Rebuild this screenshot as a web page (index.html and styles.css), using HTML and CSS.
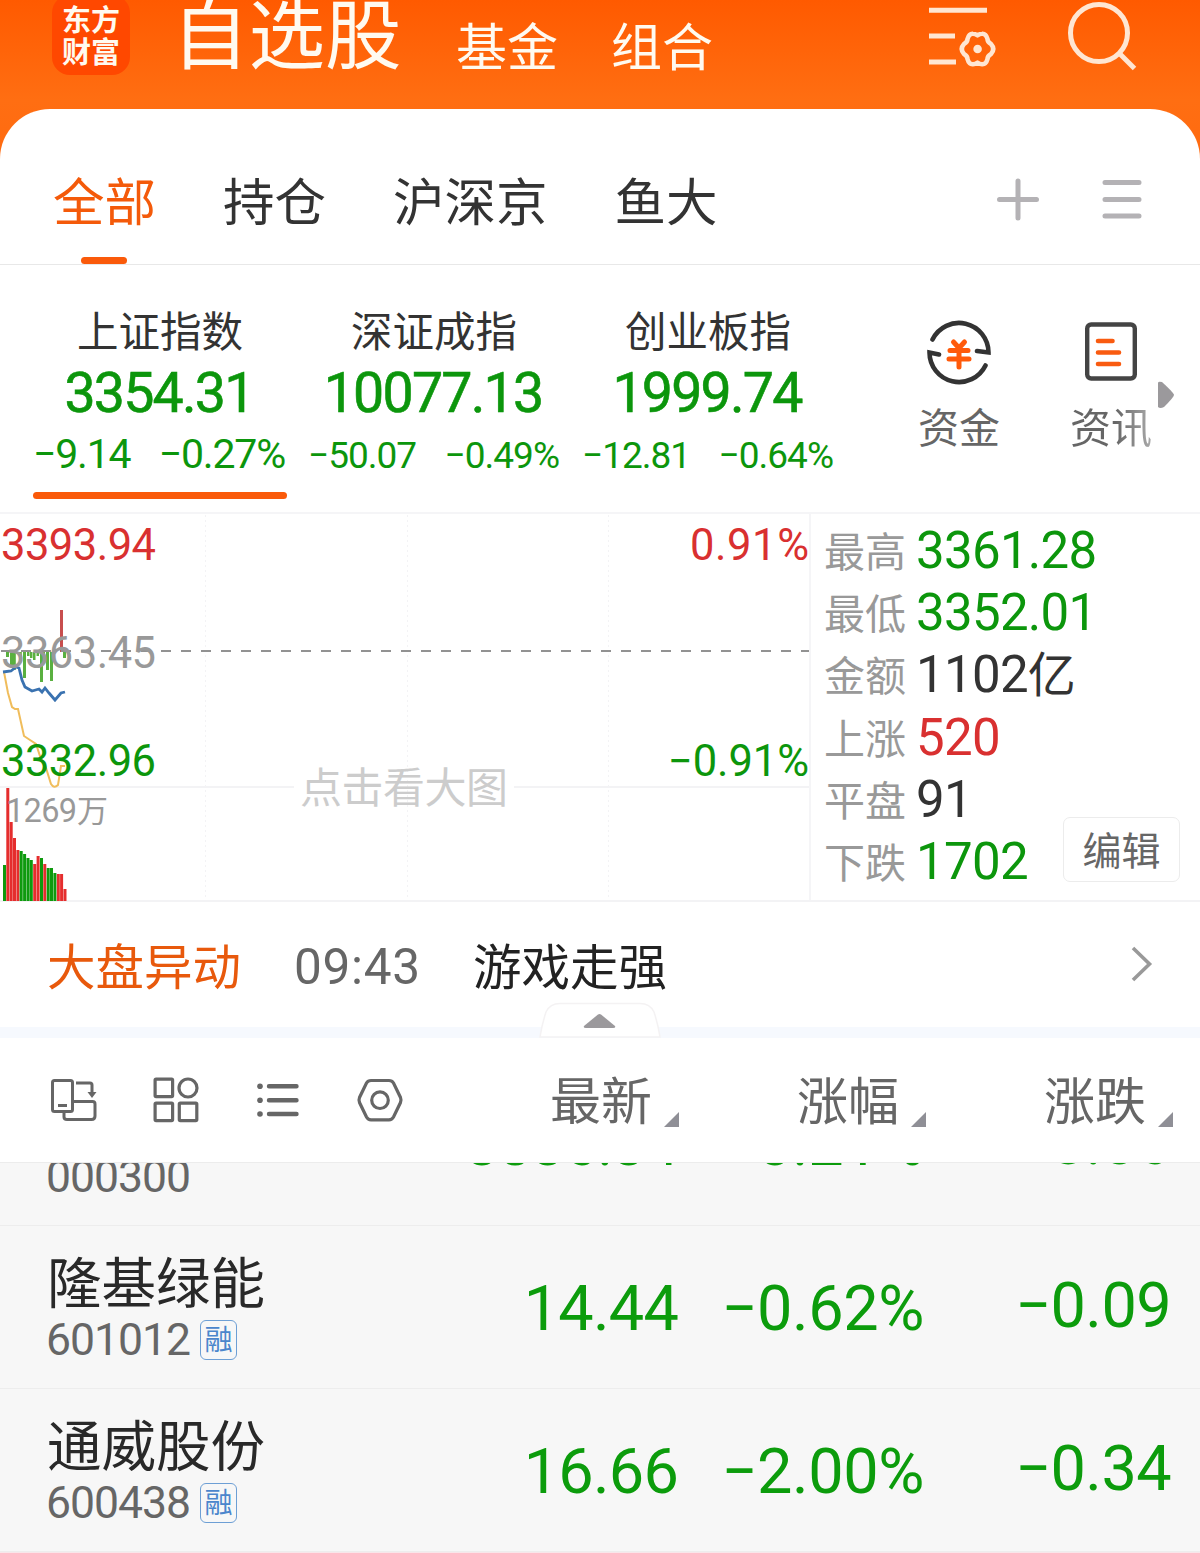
FILE: index.html
```html
<!DOCTYPE html>
<html lang="zh-CN">
<head>
<meta charset="utf-8">
<title>自选股</title>
<link rel="stylesheet" href="styles.css">
</head>
<body>
<header class="header">
  <div class="logo"><span>东方</span><span>财富</span></div>
  <nav class="main-nav">
    <span class="main-nav-active">自选股</span>
    <span class="main-nav-item">基金</span>
    <span class="main-nav-item">组合</span>
  </nav>
  <svg class="icon-manage" width="72" height="70" viewBox="0 0 72 70" fill="none" stroke="#ffe6d2" stroke-width="5">
    <path d="M3 10.300H61M3 36H29M3 62H30"/>
    <path stroke-width="4.600" stroke-linejoin="round" d="M51.500 35.300Q54 33.800 56 33.800Q60 33.500 61.500 39Q61.500 42 65 44Q69.500 49 65 54Q61.500 56 61.500 59Q60 64.500 56 64.200Q54 64.200 51.500 62.700Q49 64.200 47 64.200Q43 64.500 41.500 59Q41.500 56 38 54Q33.500 49 38 44Q41.500 42 41.500 39Q43 33.500 47 33.800Q49 33.800 51.500 35.300Z"/>
    <circle cx="51.600" cy="49" r="4.300" fill="#ffe6d2" stroke="none"/>
  </svg>
  <svg class="icon-search" width="72" height="72" viewBox="0 0 72 72" fill="none" stroke="#ffe6d2" stroke-width="5">
    <circle cx="34" cy="33" r="28.500"/>
    <path d="M54 53L69.500 68.500"/>
  </svg>
</header>

<main class="sheet">
  <div class="tabs">
    <span class="tab tab-active">全部</span>
    <span class="tab">持仓</span>
    <span class="tab">沪深京</span>
    <span class="tab">鱼大</span>
    <svg class="tab-add" width="44" height="44" viewBox="0 0 44 44" stroke="#b4b2b5" stroke-width="5" stroke-linecap="round"><path d="M3.500 22.500H40.500M22 4V41"/></svg>
    <svg class="tab-menu" width="44" height="44" viewBox="0 0 44 44" stroke="#b4b2b5" stroke-width="5" stroke-linecap="round"><path d="M5 5.500H39M5 22.500H39M5 39H39"/></svg>
  </div>

  <section class="indices">
    <div class="index index-active">
      <div class="index-name">上证指数</div>
      <div class="index-value">3354.31</div>
      <div class="index-change"><span>−9.14</span><span>−0.27%</span></div>
    </div>
    <div class="index">
      <div class="index-name">深证成指</div>
      <div class="index-value">10077.13</div>
      <div class="index-change"><span>−50.07</span><span>−0.49%</span></div>
    </div>
    <div class="index">
      <div class="index-name">创业板指</div>
      <div class="index-value">1999.74</div>
      <div class="index-change"><span>−12.81</span><span>−0.64%</span></div>
    </div>
    <div class="shortcut">
      <svg width="68" height="68" viewBox="0 0 68 68" fill="none" stroke="#333" stroke-width="4.600" stroke-linecap="round">
        <path d="M7.500 23A29.500 29.500 0 0 1 63.500 36L52 34.500M60.500 49A29.500 29.500 0 0 1 4.500 36L14 38" transform="translate(0 -1.500)"/>
        <path stroke="#ff5a0a" stroke-width="5" d="M28.500 24L34 30L39.500 24M25 32.500H43M24 41H44M34 31V49"/>
      </svg>
      <span>资金</span>
    </div>
    <div class="shortcut">
      <svg width="68" height="68" viewBox="0 0 68 68" fill="none" stroke="#444" stroke-width="4.400" stroke-linecap="round">
        <rect x="10.200" y="6.500" width="47.600" height="54" rx="4"/>
        <path stroke="#f95b10" stroke-width="4.600" d="M21 23H35.500M21 34.500H42M21 46H42"/>
      </svg>
      <span class="shortcut-fade">资讯</span>
    </div>
    <svg class="more" width="16" height="28" viewBox="0 0 16 28"><path d="M0 2Q0 0 4 1Q16 12 16 14Q16 16 6 26Q2 28 0 26Z" fill="#9b999c"/></svg>
  </section>

  <section class="market">
    <svg class="chart" width="810" height="388" viewBox="0 513 810 388">
      <g stroke="#f3f3f5" stroke-width="2">
        <path d="M0 787H294M514 787H810"/>
        <path stroke-dasharray="2 3" stroke-width="1" d="M205.500 515V900M407.500 515V900M608.500 515V900"/>
      </g>
      <path d="M4 672L8 693L12 707L15 709L18 709L24 736L30 740L36 744L40 756L46 768L51 784Q54 789 58 785L61 766L65 766" fill="none" stroke="#f0bd5c" stroke-width="2"/>
      <path d="M6 652h3v5h-3zM10 652h3v13h-3zM13 652h2.800v18h-2.800zM19 652h2.800v8h-2.800zM23 652h3v26h-3zM27 652h2.500v4h-2.500zM30 652h2.500v6h-2.500zM33 652h2.500v8h-2.500zM36.500 652h2.500v4h-2.500zM40 652h3v30h-3zM43 652h2v4h-2zM46 652h3v18h-3zM50 652h3v29h-3zM63 652h3v6h-3z" fill="#5ab040"/>
      <path d="M61.500 610V652" stroke="#c84e4e" stroke-width="3"/>
      <path d="M1 651H810" stroke="#929292" stroke-width="2" stroke-dasharray="10 10"/>
      <path d="M3 672L11 671L16 667L19 668L22 680L25 687L32 691L39 689L42 692L45 688L49 693L55 700L61 693L65 692" fill="none" stroke="#3a72b0" stroke-width="2.800"/>
      <g class="chart-label">
        <text class="up" x="1" y="560" textLength="155">3393.94</text>
        <text class="flat" x="1" y="668" textLength="155">3363.45</text>
        <text class="down" x="1" y="776" textLength="155">3332.96</text>
        <text class="up" x="690" y="560" textLength="119">0.91%</text>
        <text class="down" x="668" y="776" textLength="141">−0.91%</text>
      </g>
      <path d="M6.300 788h3v113h-3zM9.700 822h3v79h-3zM13 838h3v63h-3zM16.400 850h3v51h-3zM33.200 864h3v37h-3zM36.600 856h3v45h-3zM43.300 864h3v37h-3zM56.800 874h3v27h-3zM60.100 874h3v27h-3zM63.500 889h3v12h-3z" fill="#e52d2d"/>
      <path d="M3 865h3v36h-3zM19.700 851h3v50h-3zM23.100 854h3v47h-3zM26.500 858h3v43h-3zM29.800 860h3v41h-3zM40 858h3v43h-3zM46.700 868h3v33h-3zM50 868h3v33h-3zM53.400 873h3v28h-3z" fill="#0d9a0d"/>
      <text class="volume" x="6" y="822" textLength="71">1269</text>
      <text class="volume-unit" x="77" y="822">万</text>
      <text class="hint" x="300" y="803" textLength="208">点击看大图</text>
    </svg>
    <dl class="stats">
      <div><dt>最高</dt><dd class="down">3361.28</dd></div>
      <div><dt>最低</dt><dd class="down">3352.01</dd></div>
      <div><dt>金额</dt><dd>1102<span class="unit">亿</span></dd></div>
      <div><dt>上涨</dt><dd class="up">520</dd></div>
      <div><dt>平盘</dt><dd>91</dd></div>
      <div><dt>下跌</dt><dd class="down">1702</dd></div>
    </dl>
    <button class="edit">编辑</button>
  </section>

  <section class="news">
    <span class="news-tag">大盘异动</span>
    <span class="news-time">09:43</span>
    <span class="news-title">游戏走强</span>
    <svg class="news-arrow" width="24" height="40" viewBox="0 0 24 40" fill="none" stroke="#999" stroke-width="3.600"><path d="M3 4L19.500 20L3 36"/></svg>
    <svg class="collapse" width="124" height="37" viewBox="0 0 124 37"><path d="M2 35Q4 22 8 10Q12 1.500 22 1.500H102Q112 1.500 116 10Q120 22 122 35Z" fill="#fff" stroke="#f4f2f3" stroke-width="1.500"/><path d="M46 24L60 12.500Q61.500 11.500 63 12.500L77 24Q78 26 75 26H48Q45 26 46 24Z" fill="#9b999c"/></svg>
  </section>

  <section class="toolbar">
    <div class="tools">
      <svg width="50" height="50" viewBox="0 0 50 50" fill="none" stroke="#666" stroke-width="3">
        <rect x="3.500" y="5.500" width="20" height="31" rx="2"/>
        <path d="M24 26.500H43.500Q46 26.500 46 29V41Q46 44.500 42.500 44.500H18Q15 44.500 15 42V37M9 30.500H18M27 8H41Q43 8 43 10V18"/>
        <path d="M38.500 17H47.500L43 23Z" fill="#666" stroke="none"/>
      </svg>
      <svg width="50" height="50" viewBox="0.500 0.500 50 50" fill="none" stroke="#666" stroke-width="3.200">
        <rect x="4.600" y="4.600" width="17.500" height="17.500" rx="1"/><circle cx="37.500" cy="13.500" r="9"/>
        <rect x="4.600" y="28.600" width="17.500" height="17.500" rx="1"/><rect x="28.800" y="28.600" width="17.500" height="17.500" rx="1"/>
      </svg>
      <svg width="50" height="50" viewBox="0 0 50 50" fill="none" stroke="#666" stroke-width="4.400" stroke-linecap="round">
        <path d="M16 11.300H43.500M16 25.200H43.500M16 39H43.500"/>
        <g fill="#666" stroke="none"><circle cx="7" cy="11.300" r="2.800"/><circle cx="7" cy="25.200" r="2.800"/><circle cx="7" cy="39" r="2.800"/></g>
      </svg>
      <svg width="50" height="50" viewBox="0 0 50 50" fill="none" stroke="#666" stroke-width="3.200">
        <path d="M16 5.500H34Q37 5.500 38.500 8L45.500 22.500Q46.500 25 45.500 27.500L38.500 42Q37 44.800 34 44.800H16Q13 44.800 11.500 42L4.500 27.500Q3.500 25 4.500 22.500L11.500 8Q13 5.500 16 5.500Z"/>
        <circle cx="25" cy="25.200" r="8.300"/>
      </svg>
    </div>
    <div class="sort">最新</div>
    <div class="sort">涨幅</div>
    <div class="sort sort-last">涨跌</div>
  </section>

  <section class="stocks">
    <div class="stock stock-first">
      <div class="stock-id"><div class="stock-name">沪深300</div><div class="stock-code">000300</div></div>
      <span class="price price-long">3836.34</span><span class="percent">−0.21%</span><span class="delta">−8.06</span>
    </div>
    <div class="stock">
      <div class="stock-id"><div class="stock-name">隆基绿能</div><div class="stock-code">601012<span class="badge">融</span></div></div>
      <span class="price">14.44</span><span class="percent">−0.62%</span><span class="delta">−0.09</span>
    </div>
    <div class="stock">
      <div class="stock-id"><div class="stock-name">通威股份</div><div class="stock-code">600438<span class="badge">融</span></div></div>
      <span class="price">16.66</span><span class="percent">−2.00%</span><span class="delta">−0.34</span>
    </div>
    <div class="next-row"></div>
  </section>
</main>
</body>
</html>
```
FILE: styles.css
```css
* { box-sizing: border-box; }
body {
  margin: 0;
  width: 1200px;
  height: 1553px;
  overflow: hidden;
  font-family: Roboto, "Noto Sans CJK SC", sans-serif;
  color: #333;
  background: linear-gradient(#ff5a00 0, #ff6e12 100px, #ff6a10 160px);
}
.up { color: #d93030; fill: #d93030; }
.down { color: #0c960c; fill: #0c960c; }
.flat { fill: #999; }

.header { display: flex; height: 109px; padding-left: 52px; color: #fffaf0; }
.logo {
  display: flex; flex-direction: column; align-items: center; flex: none;
  width: 78px; height: 80px; margin-top: -5px; padding-top: 10px;
  border-radius: 18px; background: #ff4800;
  font-size: 29px; font-weight: 700; line-height: 32px;
}
.main-nav { display: flex; flex: none; width: 752px; margin-left: 42px; white-space: nowrap; }
.main-nav-active { width: 284px; font-size: 76.500px; line-height: 75px; }
.main-nav-item { width: 155px; font-size: 51px; line-height: 98px; }
.icon-manage { flex: none; margin: 0 67px 0 2px; }
.icon-search { flex: none; }

.sheet { height: 1444px; border-radius: 50px 50px 0 0; background: #fff; }
.tabs { display: flex; height: 156px; padding: 14px 0 0 53px; border-bottom: 1px solid #e8e8e8; }
.tab { position: relative; height: 141px; margin-right: 67px; font-size: 51.500px; line-height: 161px; white-space: nowrap; }
.tab-active { color: #f45a0a; }
.tab-active::after { content: ""; position: absolute; left: 28px; bottom: 0; width: 46px; height: 7px; border-radius: 4px; background: #fa5a0a; }
.tab-add { margin: 54px 60px 0 auto; }
.tab-menu { margin: 54px 56px 0 0; }

.indices { display: flex; position: relative; height: 249px; padding-left: 23px; border-bottom: 2px solid #f5f5f7; }
.index { position: relative; width: 274px; height: 234px; padding-top: 38px; text-align: center; }
.index-active::after { content: ""; position: absolute; left: 10px; bottom: 0; width: 254px; height: 7px; border-radius: 4px; background: #fa5a0a; }
.index-name { font-size: 41.500px; line-height: 60px; }
.index-value { padding-right: 2px; font-size: 55.500px; line-height: 62px; letter-spacing: -1.800px; color: #0c960c; -webkit-text-stroke: 0.600px #0c960c; }
.index-change { display: flex; justify-content: space-between; padding: 0 12px 0 11px; font-size: 37px; line-height: 61px; letter-spacing: -1px; color: #0c960c; }
.index-active .index-change { padding: 0 12px 0 10px; font-size: 41px; line-height: 58px; letter-spacing: -1.200px; }
.shortcut { display: flex; flex-direction: column; align-items: center; width: 152px; padding-top: 53px; font-size: 41px; line-height: 87px; color: #666; }
.index + .shortcut { margin-left: 38px; }
.shortcut-fade { color: transparent; background: linear-gradient(90deg, #666 55%, #aaa); background-clip: text; -webkit-background-clip: text; }
.more { position: absolute; left: 1158px; top: 116px; }

.market { display: flex; position: relative; height: 389px; margin-top: -1px; border-bottom: 2px solid #f3f3f5; }
.chart { flex: none; }
.chart-label { font-size: 43.500px; }
.volume { font-size: 32.500px; fill: #999; }
.volume-unit { font-size: 31px; fill: #999; }
.hint { font-size: 42px; fill: #ccc; }
.stats { flex: 1; margin: 0 0 0 -1px; padding: 7px 0 0 13px; border-left: 2px solid #f5f5f7; }
.stats div { display: flex; height: 62.200px; line-height: 62px; }
.stats dt { width: 92px; padding-top: 2px; font-size: 41px; color: #999; }
.stats dd { margin: 0; font-size: 51px; letter-spacing: -0.700px; }
.unit { font-size: 48px; }
.edit { position: absolute; right: 20px; bottom: 18px; width: 117px; height: 65px; padding: 5px 0 0; border: 1px solid #ececec; border-radius: 7px; background: #fff; color: #666; font: 39px/58px Roboto, "Noto Sans CJK SC", sans-serif; }

.news { display: flex; position: relative; height: 136px; padding-left: 47px; border-bottom: 11px solid #f6f9fe; font-size: 48.500px; line-height: 133px; white-space: nowrap; }
.news-tag { width: 247px; color: #e8590c; }
.news-time { width: 179px; font-size: 49.500px; line-height: 130px; letter-spacing: 0.700px; color: #666; }
.news-title { color: #222; }
.news-arrow { margin: 42px 46px 0 auto; }
.collapse { position: absolute; left: 538px; top: 100px; }

.toolbar { display: flex; height: 125px; padding-left: 49px; border-bottom: 1px solid #ececec; background: #fff; }
.tools { display: flex; flex: none; gap: 52px; width: 501px; padding-top: 37px; }
.sort { position: relative; flex: none; width: 247px; height: 124px; font-size: 51px; line-height: 129px; color: #666; }
.sort-last { width: 140px; }
.sort::after { content: ""; position: absolute; left: 114px; top: 74px; width: 15px; height: 15px; background: #8f8f96; clip-path: polygon(100% 0, 100% 100%, 0 100%); }

.stocks { height: 390px; overflow: hidden; background: #f7f7f7; }
.stock { display: flex; height: 163px; padding-left: 47px; border-bottom: 1px solid #ededed; font-size: 63px; line-height: 165px; color: #0c9c0c; white-space: nowrap; }
.stock-first { margin-top: -100px; line-height: 161px; }
.stock-id { flex: none; width: 330px; padding-top: 26px; }
.stock-name { font-size: 54.500px; line-height: 64px; color: #292929; }
.stock-code { display: flex; align-items: center; margin: -2px 0 0 -1px; font-size: 44.500px; line-height: 52px; letter-spacing: -1px; color: #666; }
.badge { width: 37px; height: 40px; margin-left: 10px; border: 1.500px solid #6d9fd5; border-radius: 6px; font-size: 28px; line-height: 39px; letter-spacing: 0; text-align: center; color: #4b86cc; }
.price { flex: none; width: 301px; text-align: right; letter-spacing: -0.800px; }
.price-long { font-size: 60px; line-height: 163px; letter-spacing: -0.800px; }
.percent { flex: none; width: 246px; text-align: right; letter-spacing: -0.400px; }
.delta { flex: none; width: 247px; line-height: 160px; text-align: right; letter-spacing: -0.600px; }
.next-row { height: 2px; background: #f9e6ea; }
```
